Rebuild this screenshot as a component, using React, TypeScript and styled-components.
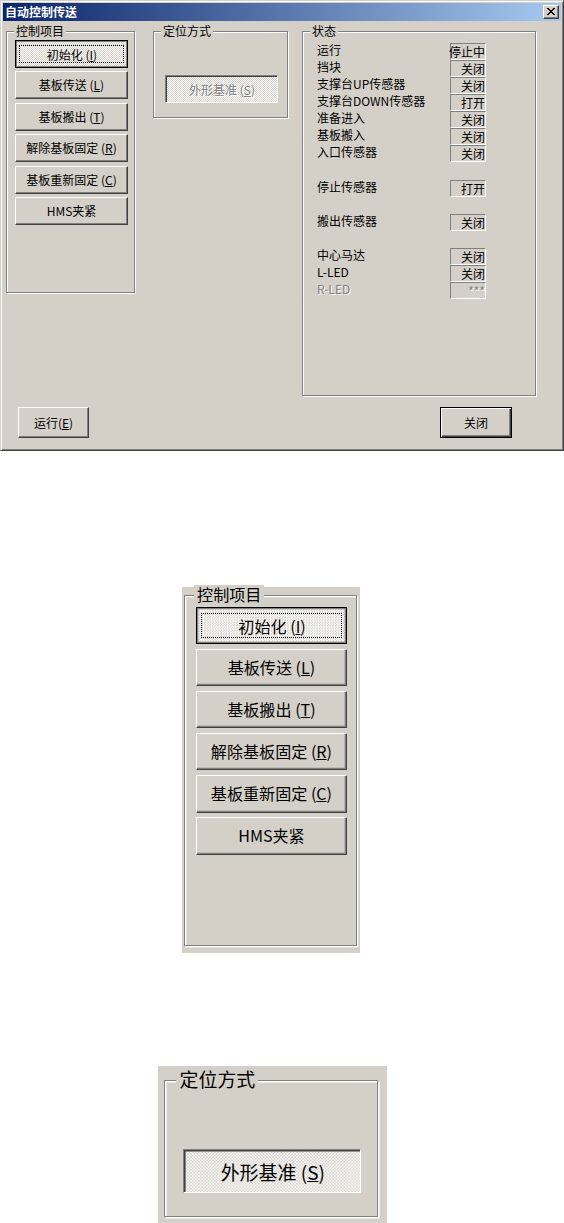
import { FC } from "react";
import styled, { createGlobalStyle, css } from "styled-components";

const face = "#d4d0c8";
const shadow = "#808080";
const darkShadow = "#404040";
const checker = `repeating-conic-gradient(#ffffff 0 25%, ${face} 0 50%) 0 0 / 2px 2px`;

const GlobalStyle = createGlobalStyle`
  html, body {
    margin: 0;
    padding: 0;
    background: #fff;
  }
  body {
    font-family: "Noto Sans CJK SC", "DejaVu Sans", sans-serif;
    font-size: 12px;
    color: #000;
  }
`;

const Page = styled.div`
  width: 564px;
  min-height: 1223px;
  display: flex;
  flex-direction: column;
  background: #fff;
`;

const Dialog = styled.div`
  box-sizing: border-box;
  width: 564px;
  height: 451px;
  background: ${face};
  border: 1px solid;
  border-color: ${face} ${darkShadow} ${darkShadow} ${face};
  box-shadow: inset 1px 1px 0 #fff, inset -1px -1px 0 ${shadow};
  padding: 2px;
  display: flex;
  flex-direction: column;
`;

const TitleBar = styled.div`
  height: 18px;
  flex: none;
  display: flex;
  align-items: center;
  justify-content: space-between;
  padding: 0 2px 0 2px;
  background: linear-gradient(to right, #0a246a, #a6caf0);
`;

const TitleText = styled.span`
  color: #fff;
  font-weight: bold;
  font-size: 12px;
  line-height: 14px;
`;

const CloseBox = styled.div`
  box-sizing: border-box;
  width: 16px;
  height: 14px;
  display: flex;
  align-items: center;
  justify-content: center;
  background: ${face};
  border: 1px solid;
  border-color: #fff ${darkShadow} ${darkShadow} #fff;
  box-shadow: inset -1px -1px 0 ${shadow};
  padding: 0 1px 1px 0;
`;

const GroupsRow = styled.div`
  display: flex;
  align-items: flex-start;
  margin: 10px 0 0 3px;
`;

const Group = styled.div<{ $w: number; $h: number; $pad: string }>`
  position: relative;
  box-sizing: border-box;
  flex: none;
  width: ${(p) => p.$w}px;
  height: ${(p) => p.$h}px;
  padding: ${(p) => p.$pad};
  border: 1px solid ${shadow};
  box-shadow: inset 1px 1px 0 #fff, 1px 1px 0 #fff;
`;

const Legend = styled.span`
  position: absolute;
  top: -8px;
  left: 7px;
  padding: 0 2px;
  background: ${face};
  font-size: 12px;
  line-height: 14px;
  white-space: nowrap;
`;

const ButtonStack = styled.div`
  display: flex;
  flex-direction: column;
  gap: 3.4px;
`;

type Look = "raised" | "default" | "focused" | "checked";

const PushButton = styled.div<{ $look: Look; $w: number; $h: number; $grey?: boolean }>`
  position: relative;
  box-sizing: border-box;
  width: ${(p) => p.$w}px;
  height: ${(p) => p.$h}px;
  display: flex;
  align-items: center;
  justify-content: center;
  font-size: 12px;
  line-height: 14px;
  white-space: nowrap;
  background: ${face};
  border: 1px solid;
  ${(p) =>
    p.$look === "raised" &&
    css`
      border-color: #fff ${darkShadow} ${darkShadow} #fff;
      box-shadow: inset -1px -1px 0 ${shadow};
    `}
  ${(p) =>
    p.$look === "default" &&
    css`
      border-color: #000;
      box-shadow: inset 1px 1px 0 #fff, inset -1px -1px 0 ${darkShadow},
        inset -2px -2px 0 ${shadow};
    `}
  ${(p) =>
    p.$look === "focused" &&
    css`
      border-color: #000;
      box-shadow: inset 1px 1px 0 ${shadow}, inset -1px -1px 0 ${shadow};
      background: ${checker};
      padding: 1px 0 0 1px;
      &::after {
        content: "";
        position: absolute;
        inset: 4px 3px 4px 3px;
        border: 1px dotted #000;
      }
    `}
  ${(p) =>
    p.$look === "checked" &&
    css`
      border-color: ${shadow} #fff #fff ${shadow};
      box-shadow: inset 1px 1px 0 ${darkShadow};
      background: ${checker};
      padding: 1px 0 0 1px;
    `}
  ${(p) =>
    p.$grey &&
    css`
      color: ${shadow};
      text-shadow: 1px 1px 0 #fff;
    `}
`;

const PositionBody = styled.div`
  padding: 43px 0 0 11px;
`;

const StatusList = styled.div`
  display: flex;
  flex-direction: column;
`;

const StatusRow = styled.div<{ $gap?: number }>`
  display: flex;
  align-items: flex-start;
  height: 17px;
  margin-top: ${(p) => p.$gap ?? 0}px;
`;

const StatusLabel = styled.span<{ $disabled?: boolean }>`
  width: 133px;
  line-height: 14px;
  white-space: nowrap;
  color: ${(p) => (p.$disabled ? shadow : "#000")};
  text-shadow: ${(p) => (p.$disabled ? "1px 1px 0 #fff" : "none")};
`;

const ValueBox = styled.span<{ $disabled?: boolean }>`
  box-sizing: border-box;
  width: 36px;
  height: 17px;
  display: flex;
  align-items: center;
  justify-content: flex-end;
  padding: 1px 0 0 0;
  white-space: nowrap;
  line-height: 14px;
  border: 1px solid;
  border-color: ${shadow} #fff #fff ${shadow};
  color: ${(p) => (p.$disabled ? shadow : "#000")};
  text-shadow: ${(p) => (p.$disabled ? "1px 1px 0 #fff" : "none")};
`;

const Footer = styled.div`
  display: flex;
  justify-content: space-between;
  margin-top: 11px;
  padding: 0 49px 0 15px;
`;

const Preview = styled.div<{ $left: number; $top: number }>`
  align-self: flex-start;
  margin: ${(p) => p.$top}px 0 0 ${(p) => p.$left}px;
`;

const Zoomed = styled.div<{ $factor: number; $pad: string }>`
  zoom: ${(p) => p.$factor};
  padding: ${(p) => p.$pad};
  background: ${face};
`;

const Spacer = styled.div<{ $w: number }>`
  flex: none;
  width: ${(p) => p.$w}px;
`;

type ControlButton = { text: string; key?: string; focused?: boolean };

const controlButtons: ControlButton[] = [
  { text: "初始化 ", key: "I", focused: true },
  { text: "基板传送 ", key: "L" },
  { text: "基板搬出 ", key: "T" },
  { text: "解除基板固定 ", key: "R" },
  { text: "基板重新固定 ", key: "C" },
  { text: "HMS夹紧" },
];

type StatusItem = { label: string; value: string; gap?: number; disabled?: boolean };

const statusItems: StatusItem[] = [
  { label: "运行", value: "停止中" },
  { label: "挡块", value: "关闭" },
  { label: "支撑台UP传感器", value: "关闭" },
  { label: "支撑台DOWN传感器", value: "打开" },
  { label: "准备进入", value: "关闭" },
  { label: "基板搬入", value: "关闭" },
  { label: "入口传感器", value: "关闭" },
  { label: "停止传感器", value: "打开", gap: 18 },
  { label: "搬出传感器", value: "关闭", gap: 17 },
  { label: "中心马达", value: "关闭", gap: 17 },
  { label: "L-LED", value: "关闭" },
  { label: "R-LED", value: "***", disabled: true },
];

const Caption: FC<{ text: string; mnemonic?: string }> = ({ text, mnemonic }) => (
  <span>
    {text}
    {mnemonic && (
      <>
        (<u>{mnemonic}</u>)
      </>
    )}
  </span>
);

const CloseGlyph = () => (
  <svg width="8" height="7" viewBox="0 0 8 7" shapeRendering="crispEdges">
    <path
      fill="#000"
      d="M0 0h2v1H0zM6 0h2v1H6zM1 1h2v1H1zM5 1h2v1H5zM2 2h4v1H2zM3 3h2v1H3zM2 4h4v1H2zM1 5h2v1H1zM5 5h2v1H5zM0 6h2v1H0zM6 6h2v1H6z"
    />
  </svg>
);

const ControlGroup = () => (
  <Group $w={129} $h={262} $pad="8px 0 0 8px">
    <Legend>控制项目</Legend>
    <ButtonStack>
      {controlButtons.map((b) => (
        <PushButton key={b.text} $look={b.focused ? "focused" : "raised"} $w={113} $h={28}>
          <Caption text={b.text} mnemonic={b.key} />
        </PushButton>
      ))}
    </ButtonStack>
  </Group>
);

const PositionGroup: FC<{ disabled?: boolean }> = ({ disabled }) => (
  <Group $w={135} $h={87} $pad="0">
    <Legend>定位方式</Legend>
    <PositionBody>
      <PushButton $look="checked" $w={113} $h={28} $grey={disabled}>
        <Caption text="外形基准 " mnemonic="S" />
      </PushButton>
    </PositionBody>
  </Group>
);

const StatusGroup = () => (
  <Group $w={234} $h={365} $pad="11px 0 0 14px">
    <Legend>状态</Legend>
    <StatusList>
      {statusItems.map((s) => (
        <StatusRow key={s.label} $gap={s.gap}>
          <StatusLabel $disabled={s.disabled}>{s.label}</StatusLabel>
          <ValueBox $disabled={s.disabled}>{s.value}</ValueBox>
        </StatusRow>
      ))}
    </StatusList>
  </Group>
);

export default function App() {
  return (
    <Page>
      <GlobalStyle />
      <Dialog>
        <TitleBar>
          <TitleText>自动控制传送</TitleText>
          <CloseBox>
            <CloseGlyph />
          </CloseBox>
        </TitleBar>
        <GroupsRow>
          <ControlGroup />
          <Spacer $w={18} />
          <PositionGroup disabled />
          <Spacer $w={14} />
          <StatusGroup />
        </GroupsRow>
        <Footer>
          <PushButton $look="raised" $w={71} $h={31}>
            <Caption text="运行" mnemonic="E" />
          </PushButton>
          <PushButton $look="default" $w={72} $h={31}>
            关闭
          </PushButton>
        </Footer>
      </Dialog>
      <Preview $left={182} $top={136}>
        <Zoomed $factor={1.34} $pad="6px 2px 5px 1.5px">
          <ControlGroup />
        </Zoomed>
      </Preview>
      <Preview $left={158} $top={113}>
        <Zoomed $factor={1.58} $pad="9px 6px 7px 4px">
          <PositionGroup />
        </Zoomed>
      </Preview>
    </Page>
  );
}
